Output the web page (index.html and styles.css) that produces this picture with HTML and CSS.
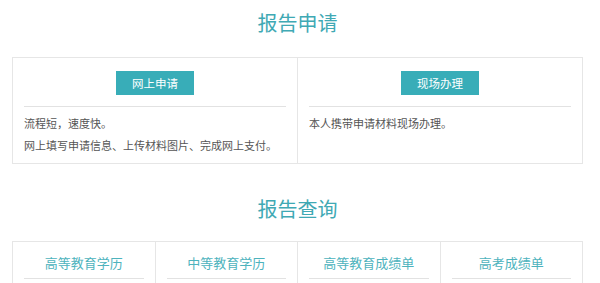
FILE: index.html
```html
<!DOCTYPE html>
<html lang="zh-CN">
<head>
    <meta charset="UTF-8">
    <meta name="viewport" content="width=device-width, initial-scale=1.0">
    <title>报告申请</title>
    <link rel="stylesheet" href="styles.css">
</head>
<body>
    <div class="page">
        <h2 class="section-title">报告申请</h2>
        <div class="apply-box">
            <div class="apply-col">
                <div class="apply-head">
                    <span class="apply-btn">网上申请</span>
                </div>
                <div class="apply-body">
                    <p>流程短，速度快。</p>
                    <p>网上填写申请信息、上传材料图片、完成网上支付。</p>
                </div>
            </div>
            <div class="apply-col">
                <div class="apply-head">
                    <span class="apply-btn">现场办理</span>
                </div>
                <div class="apply-body">
                    <p>本人携带申请材料现场办理。</p>
                </div>
            </div>
        </div>

        <h2 class="section-title second">报告查询</h2>
        <div class="query-box">
            <div class="query-col"><div class="query-head">高等教育学历</div></div>
            <div class="query-col"><div class="query-head">中等教育学历</div></div>
            <div class="query-col"><div class="query-head">高等教育成绩单</div></div>
            <div class="query-col"><div class="query-head">高考成绩单</div></div>
        </div>
    </div>
</body>
</html>
```

FILE: styles.css
```css
body {
    margin: 0;
    background-color: #fff;
    font-family: "Noto Sans CJK SC", "Noto Sans", sans-serif;
    color: #555;
}
.page {
    width: 571px;
    margin-left: 12px;
}
.section-title {
    margin: 0;
    padding-top: 10px;
    margin-bottom: 21px;
    font-size: 20px;
    line-height: 26px;
    font-weight: normal;
    text-align: center;
    color: #3fa9b4;
}
.section-title.second {
    padding-top: 0;
    margin-top: 32px;
    margin-bottom: 19px;
}
.apply-box {
    display: flex;
    border: 1px solid #e6e6e6;
}
.apply-col {
    flex: 1;
    padding: 0 11px 7px;
}
.apply-col + .apply-col {
    border-left: 1px solid #e6e6e6;
}
.apply-head {
    padding-top: 11px;
    padding-bottom: 11px;
    border-bottom: 1px solid #e2e2e2;
    text-align: center;
}
.apply-btn {
    display: inline-block;
    width: 78px;
    height: 24px;
    line-height: 24px;
    background-color: #38adb8;
    color: #fff;
    font-size: 11.5px;
}
.apply-body {
    padding-top: 5px;
}
.apply-body p {
    margin: 0;
    font-size: 11px;
    line-height: 22px;
    color: #555;
}
.query-box {
    display: flex;
    border: 1px solid #e6e6e6;
    height: 80px;
}
.query-col {
    flex: 1;
    padding: 0 11px;
}
.query-col + .query-col {
    border-left: 1px solid #e6e6e6;
}
.query-head {
    padding-top: 11px;
    padding-bottom: 5px;
    border-bottom: 1px solid #e2e2e2;
    text-align: center;
    font-size: 13px;
    line-height: 20px;
    color: #4db3bd;
}
```
